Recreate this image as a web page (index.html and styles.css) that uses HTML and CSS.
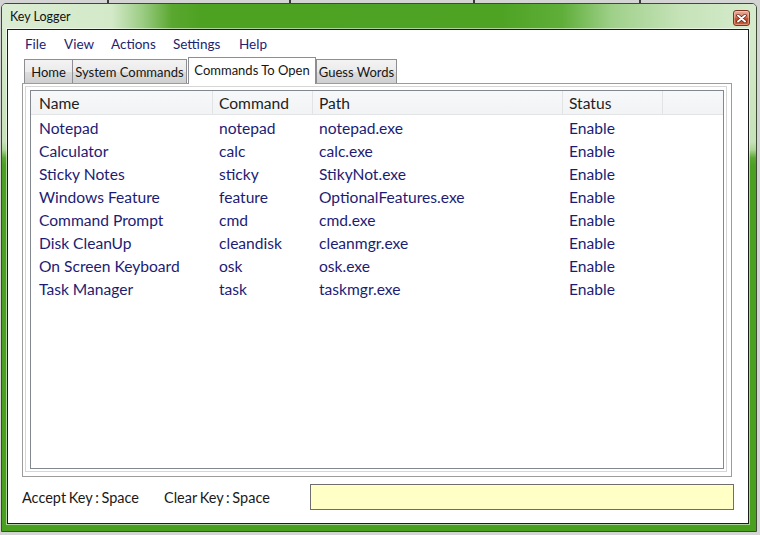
FILE: index.html
```html
<!DOCTYPE html>
<html>
<head>
<meta charset="utf-8">
<title>Key Logger</title>
<link rel="stylesheet" href="styles.css">
</head>
<body>
<div class="desktop">
  <div class="window">
    <div class="titlebar">
      <span class="title">Key Logger</span>
      <div class="close">
        <svg width="11" height="9" viewBox="0 0 11 9">
          <path d="M2 1.5 L9 7.5 M9 1.5 L2 7.5" stroke="#5a1e12" stroke-width="3.4" stroke-linecap="round"/>
          <path d="M2 1.5 L9 7.5 M9 1.5 L2 7.5" stroke="#ffffff" stroke-width="2" stroke-linecap="round"/>
        </svg>
      </div>
    </div>
    <div class="client">
      <nav class="menubar">
        <span class="menu-item">File</span>
        <span class="menu-item">View</span>
        <span class="menu-item">Actions</span>
        <span class="menu-item">Settings</span>
        <span class="menu-item">Help</span>
      </nav>
      <div class="tabs">
        <div class="tab tab-home">Home</div>
        <div class="tab tab-sys">System Commands</div>
        <div class="tab tab-active">Commands To Open</div>
        <div class="tab tab-guess">Guess Words</div>
      </div>
      <div class="panel">
        <div class="panel-inner">
          <div class="list">
            <div class="list-head">
              <div class="hcell first">Name</div>
              <div class="hcell">Command</div>
              <div class="hcell">Path</div>
              <div class="hcell">Status</div>
              <div class="hcell last"></div>
            </div>
            <div class="list-body">
              <div class="row"><span class="cell first">Notepad</span><span class="cell">notepad</span><span class="cell">notepad.exe</span><span class="cell">Enable</span></div>
              <div class="row"><span class="cell first">Calculator</span><span class="cell">calc</span><span class="cell">calc.exe</span><span class="cell">Enable</span></div>
              <div class="row"><span class="cell first">Sticky Notes</span><span class="cell">sticky</span><span class="cell">StikyNot.exe</span><span class="cell">Enable</span></div>
              <div class="row"><span class="cell first">Windows Feature</span><span class="cell">feature</span><span class="cell">OptionalFeatures.exe</span><span class="cell">Enable</span></div>
              <div class="row"><span class="cell first">Command Prompt</span><span class="cell">cmd</span><span class="cell">cmd.exe</span><span class="cell">Enable</span></div>
              <div class="row"><span class="cell first">Disk CleanUp</span><span class="cell">cleandisk</span><span class="cell">cleanmgr.exe</span><span class="cell">Enable</span></div>
              <div class="row"><span class="cell first">On Screen Keyboard</span><span class="cell">osk</span><span class="cell">osk.exe</span><span class="cell">Enable</span></div>
              <div class="row"><span class="cell first">Task Manager</span><span class="cell">task</span><span class="cell">taskmgr.exe</span><span class="cell">Enable</span></div>
            </div>
          </div>
        </div>
      </div>
      <div class="statusbar">
        <span class="key-label">Accept Key : Space</span>
        <span class="key-label">Clear Key : Space</span>
        <div class="keybox"></div>
      </div>
    </div>
  </div>
</div>
</body>
</html>
```

FILE: styles.css
```css
html, body {
  margin: 0;
  padding: 0;
}

body {
  width: 760px;
  height: 535px;
  overflow: hidden;
  background: #d2d2d2;
  font-family: Lato, "Open Sans", sans-serif;
}

.desktop {
  width: 760px;
  height: 535px;
  padding-top: 3px;
  box-sizing: border-box;
  background:
    linear-gradient(to right, transparent 107px, #3a3a3a 107px, #3a3a3a 109px, transparent 109px,
      transparent 289px, #3a3a3a 289px, #3a3a3a 291px, transparent 291px,
      transparent 473px, #3a3a3a 473px, #3a3a3a 475px, transparent 475px,
      transparent 639px, #3a3a3a 639px, #3a3a3a 641px, transparent 641px) top left / 760px 3px no-repeat,
    #d4d4d4;
}

.window {
  box-sizing: border-box;
  margin-left: 1px;
  width: 756px;
  height: 529px;
  border: 1px solid #3c4a36;
  border-radius: 5px 5px 0 0;
  background: linear-gradient(to bottom, #d9ecd1 0, #c6e2b8 138px, #a9d592 146px, #5aa833 154px, #4ba021 162px, #49a01f 100%);
  padding: 0 7px 7px 5px;
  display: flex;
  flex-direction: column;
}

.titlebar {
  margin: 0 -7px 0 -5px;
  height: 25px;
  padding: 0 6px 0 8px;
  display: flex;
  align-items: flex-start;
  justify-content: space-between;
  border-radius: 4px 4px 0 0;
  background:
    linear-gradient(to right, #dbedd3 0, #d3e9c8 110px, #9ccd84 140px, #5aa72f 170px, #4da222 200px, #4ea324 500px, #5fae39 560px, #9fd08a 610px, #c6e3b9 680px, #d6ebcd 100%);
}

.title {
  font-size: 12.5px;
  color: #111;
  line-height: 25px;
}

.close {
  margin-top: 6px;
  width: 17px;
  height: 16px;
  box-sizing: border-box;
  border: 1px solid #7c3421;
  border-radius: 3px;
  background: linear-gradient(to bottom, #eab2a0 0, #d8765a 45%, #c24b2c 55%, #c9573a 100%);
  box-shadow: inset 0 0 0 1px rgba(255, 220, 200, 0.45);
  display: flex;
  align-items: center;
  justify-content: center;
}

.client {
  flex: 1;
  background: #fff;
  border: 1px solid #1c1c1c;
  box-shadow: 0 0 0 1px rgba(255, 255, 255, 0.55);
  display: flex;
  flex-direction: column;
  padding: 0 15px 0 14px;
}

.menubar {
  margin-top: 4px;
  height: 20px;
  padding-left: 3px;
  display: grid;
  grid-template-columns: 39px 47px 62px 66px auto;
  align-items: center;
}

.menu-item {
  font-size: 13.5px;
  color: #1c2472;
  line-height: 20px;
}

.tabs {
  margin-top: 3px;
  margin-left: 2px;
  height: 26px;
  display: flex;
  align-items: flex-end;
  position: relative;
  z-index: 1;
}

.tab {
  box-sizing: border-box;
  height: 24px;
  border: 1px solid #8c8e94;
  border-bottom: none;
  background: linear-gradient(to bottom, #f3f3f3 0, #ebebeb 50%, #dddddd 51%, #cfcfcf 100%);
  font-size: 13px;
  color: #151515;
  display: flex;
  align-items: center;
  justify-content: center;
  padding-top: 1px;
}

.tab-home { width: 49px; }
.tab-sys { width: 115px; margin-left: -1px; }
.tab-active {
  width: 128px;
  height: 27px;
  margin-left: 1px;
  margin-bottom: -1px;
  background: #fff;
  padding-top: 0;
  padding-bottom: 3px;
}
.tab-guess { width: 81px; }

.panel {
  box-sizing: border-box;
  width: 710px;
  height: 394px;
  border: 1px solid #9c9c9c;
  padding: 2px 4px 4px 2px;
}

.panel-inner {
  box-sizing: border-box;
  height: 100%;
  border: 1px solid #d6d6d6;
  padding: 3px 2px 2px 4px;
  display: flex;
}

.list {
  flex: 1;
  border: 1px solid #828790;
  background: #fff;
}

.list-head {
  display: grid;
  grid-template-columns: 182px 100px 250px 100px 1fr;
  height: 23px;
  border-bottom: 1px solid #e3e4e6;
  background: linear-gradient(to bottom, #f7f8f9 0, #f2f3f4 100%);
}

.hcell {
  box-sizing: border-box;
  border-right: 1px solid #e2e3e5;
  padding-left: 6px;
  padding-top: 1px;
  font-size: 15.6px;
  line-height: 22px;
  color: #1e1e1e;
}

.hcell.first { padding-left: 8px; }
.hcell.last { border-right: none; }

.list-body {
  padding-top: 2px;
}

.row {
  display: grid;
  grid-template-columns: 182px 100px 250px 100px 1fr;
  height: 23px;
}

.cell {
  padding-left: 6px;
  font-size: 15.6px;
  line-height: 23px;
  color: #1c1c74;
  white-space: nowrap;
}

.cell.first { padding-left: 8px; }

.statusbar {
  margin-top: 7px;
  height: 26px;
  display: grid;
  grid-template-columns: 142px 146px 424px;
  align-items: center;
}

.key-label {
  font-size: 14.5px;
  color: #1a1a1a;
  word-spacing: -1px;
}

.keybox {
  box-sizing: border-box;
  height: 26px;
  background: #ffffc6;
  border: 1px solid #6e6e6e;
}
```
